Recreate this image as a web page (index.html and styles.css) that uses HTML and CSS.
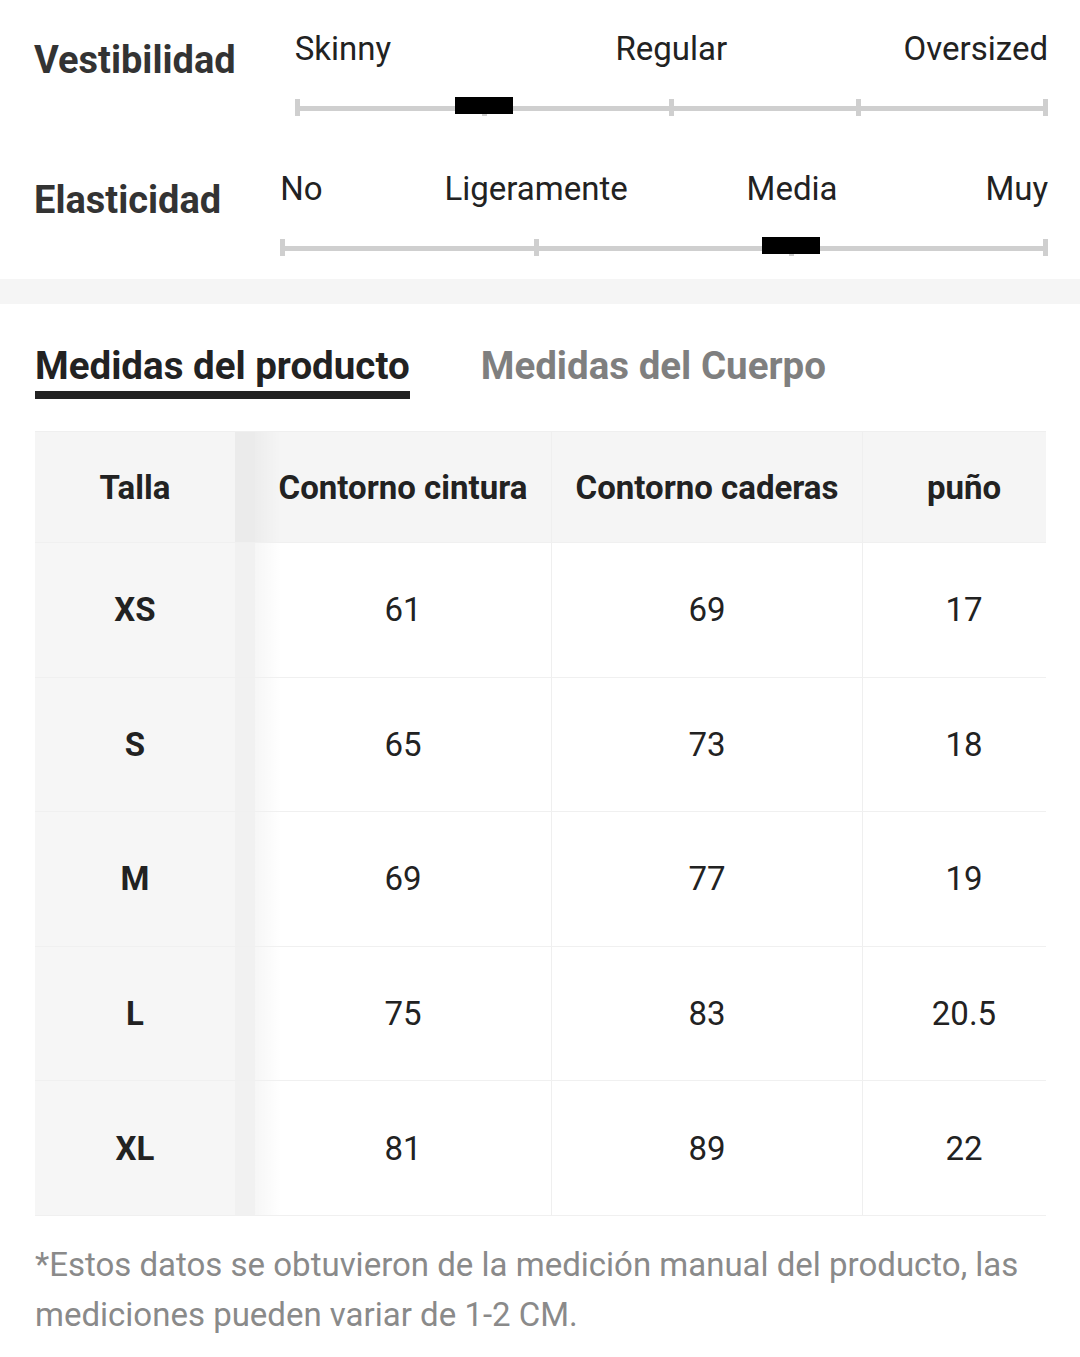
FILE: index.html
```html
<!DOCTYPE html>
<html lang="es">
<head>
<meta charset="utf-8">
<title>Medidas</title>
<link rel="stylesheet" href="styles.css">
</head>
<body>
<section class="fit">
  <div class="fit-row">
    <div class="fit-label">Vestibilidad</div>
    <div class="scale">
      <div class="scale-labels cols-8">
        <span class="lab lab-start c1">Skinny</span>
        <span class="lab lab-center c4">Regular</span>
        <span class="lab lab-end c7">Oversized</span>
      </div>
      <div class="track">
        <i class="tick"></i><i class="tick"></i><i class="tick"></i><i class="tick"></i><i class="tick"></i>
        <b class="thumb" style="left: calc(2.5px + (100% - 5px) * 0.25);"></b>
      </div>
    </div>
  </div>
  <div class="fit-row">
    <div class="fit-label">Elasticidad</div>
    <div class="scale">
      <div class="scale-labels cols-6">
        <span class="lab lab-start c1">No</span>
        <span class="lab lab-center c2">Ligeramente</span>
        <span class="lab lab-center c4">Media</span>
        <span class="lab lab-end c6">Muy</span>
      </div>
      <div class="track">
        <i class="tick"></i><i class="tick"></i><i class="tick"></i><i class="tick"></i>
        <b class="thumb" style="left: calc(2.5px + (100% - 5px) * 0.6667);"></b>
      </div>
    </div>
  </div>
</section>
<div class="band"></div>
<section class="sizes">
  <div class="tabs">
    <div class="tab active">Medidas del producto</div>
    <div class="tab">Medidas del Cuerpo</div>
  </div>
  <div class="table">
    <div class="row head">
      <div class="cell first">Talla</div>
      <div class="cell second">Contorno cintura</div>
      <div class="cell">Contorno caderas</div>
      <div class="cell last">puño</div>
    </div>
    <div class="row">
      <div class="cell first">XS</div>
      <div class="cell second">61</div>
      <div class="cell">69</div>
      <div class="cell last">17</div>
    </div>
    <div class="row">
      <div class="cell first">S</div>
      <div class="cell second">65</div>
      <div class="cell">73</div>
      <div class="cell last">18</div>
    </div>
    <div class="row">
      <div class="cell first">M</div>
      <div class="cell second">69</div>
      <div class="cell">77</div>
      <div class="cell last">19</div>
    </div>
    <div class="row">
      <div class="cell first">L</div>
      <div class="cell second">75</div>
      <div class="cell">83</div>
      <div class="cell last">20.5</div>
    </div>
    <div class="row">
      <div class="cell first">XL</div>
      <div class="cell second">81</div>
      <div class="cell">89</div>
      <div class="cell last">22</div>
    </div>
  </div>
  <p class="note">*Estos datos se obtuvieron de la medición manual del producto, las mediciones pueden variar de 1-2 CM.</p>
</section>
</body>
</html>
```
FILE: styles.css
```css
* { box-sizing: border-box; }
html, body { margin: 0; padding: 0; background: #fff; }
body {
  font-family: Roboto, "Noto Sans", "Liberation Sans", sans-serif;
  color: #222;
  width: 1080px;
}

/* fit scales */
.fit {
  display: flex;
  flex-direction: column;
  gap: 53px;
  padding: 29px 32px 23px 34px;
}
.fit-row {
  display: flex;
  align-items: flex-start;
  gap: 59px;
}
.fit-label {
  font-size: 38px;
  line-height: 46px;
  font-weight: 700;
  color: #333;
  margin-top: 8px;
  white-space: nowrap;
}
.scale { flex: 1; }
.scale-labels {
  display: grid;
  font-size: 33px;
  line-height: 40px;
  color: #222;
}
.cols-8 { grid-template-columns: repeat(8, 1fr); }
.cols-6 { grid-template-columns: repeat(6, 1fr); }
.lab { white-space: nowrap; }
.lab-start { justify-self: start; }
.lab-center { justify-self: center; }
.lab-end { justify-self: end; }
.cols-8 .c1 { grid-column: 1 / 3; }
.cols-8 .c4 { grid-column: 4 / 6; }
.cols-8 .c7 { grid-column: 7 / 9; }
.cols-6 .c1 { grid-column: 1 / 2; }
.cols-6 .c2 { grid-column: 2 / 4; }
.cols-6 .c4 { grid-column: 4 / 6; }
.cols-6 .c6 { grid-column: 6 / 7; }

.track {
  position: relative;
  height: 17px;
  margin-top: 30px;
  display: flex;
  justify-content: space-between;
}
.track::before {
  content: "";
  position: absolute;
  left: 0;
  right: 0;
  top: 7px;
  height: 5px;
  background: #cfcfcf;
}
.tick {
  width: 5px;
  height: 17px;
  background: #cfcfcf;
  position: relative;
}
.thumb {
  position: absolute;
  top: -2px;
  width: 58px;
  height: 17px;
  background: #000;
  transform: translateX(-50%);
}

.band {
  height: 25px;
  background: #f5f5f5;
}

/* sizes */
.sizes {
  padding: 39px 34px 40px 35px;
}
.tabs {
  display: flex;
  gap: 71px;
}
.tab {
  font-size: 38.5px;
  line-height: 46px;
  font-weight: 700;
  color: #7f7f7f;
  padding-bottom: 2px;
  border-bottom: 8px solid transparent;
}
.tab.active {
  color: #222;
  border-bottom-color: #222;
}

.table {
  margin-top: 32px;
  overflow: hidden;
  border-top: 1px solid #efefef;
}
.row {
  display: grid;
  grid-template-columns: 220px 297px 311px 202px;
  height: 134.6px;
  border-bottom: 1px solid #f0f0f0;
  font-size: 33px;
}
.row.head {
  height: 111px;
  background: #f5f5f5;
  font-weight: 700;
}
.cell {
  display: flex;
  align-items: center;
  justify-content: center;
  white-space: nowrap;
  border-right: 1px solid #efefef;
}
.cell.last { border-right: none; }
.cell.first {
  padding-right: 20px;
  font-weight: 700;
  border-right: none;
  background: linear-gradient(to right, #f6f6f6 200px, #f1f1f1 200px);
}
.head .cell.first {
  background: linear-gradient(to right, #f5f5f5 200px, #ebebeb 200px);
}
.cell.second {
  background: linear-gradient(to right, rgba(0,0,0,0.035), rgba(0,0,0,0) 26px);
}

.note {
  margin: 24px 0 0;
  font-size: 33px;
  line-height: 50px;
  color: #8a8a8a;
}
```
